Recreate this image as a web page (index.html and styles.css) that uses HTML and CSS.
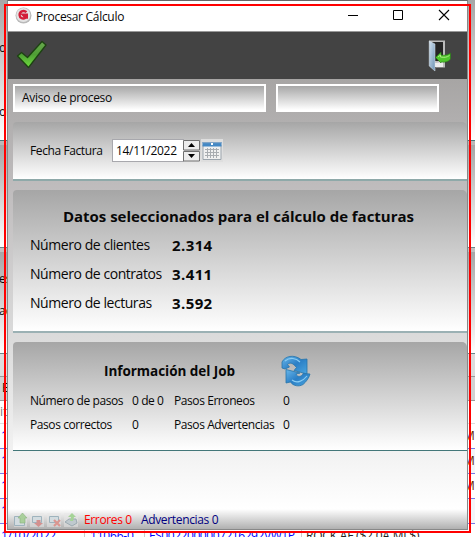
FILE: index.html
```html
<!DOCTYPE html>
<html lang="es">
<head>
<meta charset="utf-8">
<title>Procesar Cálculo</title>
<link rel="stylesheet" href="styles.css">
</head>
<body>
<div class="desk">
  <div class="back b1"><span>o</span><span>or</span></div>
  <div class="back b2"></div>
  <div class="back b3"><span>es</span><span>ac</span></div>
  <div class="back b4"></div>
  <div class="back head">E</div>
  <div class="back filter">it</div>
  <div class="back row"><span>1</span><b>M</b></div>
  <div class="back row alt"><span>1</span><b>M</b></div>
  <div class="back row"><span>1</span><b>M</b></div>
  <div class="back row alt"><span>1</span></div>
  <div class="back last"><span class="c1">1/10/2022</span><span class="c2">11066-0</span><span class="c3">ES0022000007216292VW1P</span><span class="c4">ROCK AF ($2.0A.ML$)</span></div>
</div>
<main class="window">
  <header class="title">
    <svg class="logo" width="17" height="17" viewBox="0 0 17 17"><circle cx="8.500" cy="8.500" r="8" fill="#b9b9b9"/><circle cx="8.300" cy="8" r="7" fill="#e4e4e4"/><path d="M11.500 5.200C8.500 2.600 4.400 4.800 4.600 8.200C4.800 11.200 7.800 12.300 10.600 10.800L7.800 7.800H11.800V11.800" fill="none" stroke="#d31e38" stroke-width="2.400"/></svg>
    <h1>Procesar Cálculo</h1>
    <svg class="controls" width="104" height="12" viewBox="0 0 104 12" fill="none" stroke="#000"><path d="M0 6.500h10M45.500 1.500h9v9h-9z"/><path d="M91 1l10 10M101 1L91 11" stroke-width="1.100"/></svg>
  </header>
  <nav class="tools">
    <svg width="32" height="30" viewBox="0 0 32 30"><defs><linearGradient id="g" x1="0" y1="0" x2="0" y2="1"><stop offset="0" stop-color="#6aa84f"/><stop offset=".5" stop-color="#4f9e35"/><stop offset="1" stop-color="#6ee03c"/></linearGradient></defs><path d="M1.500 16L5.500 12.500L11.500 17.500L26 1.500L30 5L12.500 27.500Z" fill="url(#g)" stroke="#1d4212" stroke-width="1.300" stroke-linejoin="round"/></svg>
    <svg width="24" height="32" viewBox="0 0 24 32"><defs><linearGradient id="d" x1="0" y1="0" x2="1" y2="1"><stop offset="0" stop-color="#d2e2f0"/><stop offset="1" stop-color="#6d93b4"/></linearGradient></defs><path d="M1 .5h16v27H8" fill="#bbb"/><path d="M4 2h11v19H6z" fill="#252525"/><path d="M7 23l8-1v5H7z" fill="#ededed"/><path d="M1.200 1L7 4v27L1.200 26z" fill="url(#d)" stroke="#dce6ed" stroke-width=".5"/><path d="M7.500 17.500L13 12v3c4 .8 7-.2 9.500-2v6c-2 3-6 3.500-9.500 3v1z" fill="#4fc52c" stroke="#287718" stroke-width=".6"/><path d="M10 17l2.500-2v2c4 .7 6 .5 9-1.500" stroke="#a7ec7e" fill="none"/></svg>
  </nav>
  <section class="content">
    <div class="fields"><div class="field notice"><span>Aviso de proceso</span></div><div class="field state"></div></div>
    <section class="panel invoice">
      <label>Fecha Factura</label>
      <div class="date"><span>14/11/2022</span></div>
      <svg class="spin" width="17" height="23" viewBox="0 0 17 23"><path d="M.5 1.500h16v9.500H.5zM.5 12.500h16v9.500H.5z" fill="#ececec" stroke="#707070"/><path d="M5 8l3.500-4L12 8zM5 15h7l-3.500 4z"/></svg>
      <svg class="calendar" width="22" height="23" viewBox="0 0 22 23"><path d="M0 0h22v23H0z" fill="#dedede"/><path d="M2 6h18v14.500H2z" fill="#f0f0f0" stroke="#9ba4ac"/><path d="M1.500 3h19v4.500h-19z" fill="#4488c4"/><path d="M1.500 3h19v1.200h-19z" fill="#80a3c5"/><path d="M10 5h2" stroke="#fff" stroke-width="2"/><path d="M4 10.500h14M4 13.500h14M4 16.500h14M6.500 9v10M9.500 9v10M12.500 9v10M15.500 9v10" stroke="#a9adb1"/></svg>
    </section>
    <section class="panel data">
      <h2>Datos seleccionados para el cálculo de facturas</h2>
      <dl>
        <dt>Número de clientes</dt><dd>2.314</dd>
        <dt>Número de contratos</dt><dd>3.411</dd>
        <dt>Número de lecturas</dt><dd>3.592</dd>
      </dl>
    </section>
    <section class="panel job">
      <div class="jobhead"><h3>Información del Job</h3>
        <svg width="30" height="32" viewBox="0 0 30 32"><defs><linearGradient id="r" x1="0" y1="0" x2="1" y2="1"><stop offset="0" stop-color="#69b7ea"/><stop offset=".5" stop-color="#2b7fc6"/><stop offset="1" stop-color="#4ba6e0"/></linearGradient></defs><path d="M1 13V7C4 1 13-1 20 4.500L26 4V19L13 15.500L15.500 12.500C12 8 9 7 6.500 9.500L8.500 12L4 14Z" fill="url(#r)" stroke="#2775aa" stroke-width=".8"/><path d="M5 28V14.500L19 18L15 19C16 22.500 21 22 22 18.500L29 19C28 23 25 27 22 29.500C18 32 12 31 9.500 27Z" fill="url(#r)" stroke="#2775aa" stroke-width=".8"/><path d="M4 6c5-4 11-3 15 1M11 25c5 4 11 1 15-4" fill="none" stroke="#8accf2" stroke-width="1.200"/></svg>
      </div>
      <div class="stats">
        <span>Número de pasos</span><span>0 de 0</span><span>Pasos Erroneos</span><span>0</span>
        <span>Pasos correctos</span><span>0</span><span>Pasos Advertencias</span><span>0</span>
      </div>
    </section>
  </section>
  <footer class="status">
    <svg width="66" height="16" viewBox="0 0 66 16"><path d="M1 1h13v14H1zM17 1h14v14H17zM34 1h14v14H34zM51 1h14v14H51z" fill="#e8e8e8" opacity=".5"/><path d="M1.500 4.500h10v9h-10zM19.500 4.500h9v6h-9zM36.500 4.500h9v6h-9z" fill="#d3dce0" stroke="#9eb3bd"/><path d="M9.500 1L14 6h-2v5H7V6H5z" fill="#a9cf9b" stroke="#8cb37f" stroke-width=".6"/><path d="M23.500 8h4v3h2.500l-4.500 4-4.500-4h2.500z" fill="#d3918f"/><path d="M41 8l6 6M47 8l-6 6" stroke="#db9690" stroke-width="2.200"/><path d="M52 10l4-3h7l1 4-5 3z" fill="#bfc9ce" stroke="#9caab1"/><path d="M59 1l4 4h-2l-1 4h-3l1-4h-3z" fill="#a5d397"/></svg>
    <span class="err">Errores 0</span><span class="warn">Advertencias 0</span>
  </footer>
</main>
<div class="outline"></div>
</body>
</html>
```
FILE: styles.css
```css
* { box-sizing: border-box; }
body { margin: 0; width: 475px; height: 537px; overflow: hidden; position: relative; font: 12px/16px "Open Sans", "Noto Sans", sans-serif; color: #080808; }
h1, h2, h3, dl, dd { margin: 0; }
svg { display: block; flex: none; }
.desk { height: 537px; overflow: hidden; }
.back { width: 475px; overflow: hidden; white-space: nowrap; }
.b1 { height: 141px; padding-top: 40px; background: linear-gradient(#a6a6a6, #fff); border-bottom: 1px solid #437779; }
.b1 span, .b3 span { display: block; margin-left: -1px; }
.b1 span + span { margin-top: 48px; }
.b2 { height: 107px; border-top: 4px solid #bab8b8; border-bottom: 1px solid #68888b; background: linear-gradient(#a6a6a6, #fff); }
.b3 { height: 106px; padding-top: 19px; border-top: 4px solid #c2c2c2; border-bottom: 1px solid #68888b; background: linear-gradient(#a6a6a6, #fff); }
.b3 span + span { margin-top: 16px; }
.b4 { height: 23px; background: #ddd; border-bottom: 1px solid #999; }
.head { height: 24px; padding: 3px 2px; background: #d3d3d3; border-bottom: 1px solid #999; }
.filter { height: 23px; padding-top: 3px; color: #777; background: #fff; border-bottom: 1px solid #ddd; }
.row { height: 25px; padding: 4px 0 0 1px; border-bottom: 1px solid #7878e8; display: flex; justify-content: space-between; background: #fff; color: #00f; }
.row b { width: 11px; font-weight: 400; color: #642800; }
.alt { background: #f3f6fa; }
.last { height: 13px; display: flex; padding-left: 1px; color: #00f; background: #fff; line-height: 16px; }
.last span { padding-top: 4px; }
.c1 { width: 83px; letter-spacing: -.2px; }
.c2 { width: 60px; padding-left: 5px; border-left: 1px solid #ccc; letter-spacing: -.2px; }
.c3 { width: 157px; padding-left: 4px; border-left: 1px solid #ccc; letter-spacing: -.45px; }
.c4 { padding-left: 4px; border-left: 1px solid #ccc; color: #222; letter-spacing: -.2px; }
.window { position: absolute; left: 7px; top: 0; width: 461px; height: 530px; display: flex; flex-direction: column; border: 1px solid #888; border-top-color: #666; }
.title { height: 31px; padding: 6px 19px 0 7px; display: flex; background: #fff; border-bottom: 1px solid #999; }
.title h1 { margin: 1px 0 0 4px; font-size: 12px; line-height: 17px; font-weight: 400; letter-spacing: -.3px; }
.controls { margin: 2px -4px 0 auto; }
.tools { height: 47px; background: #434343; display: flex; justify-content: space-between; padding: 8px 15px 0 8px; }
.content { height: 430px; padding: 5px 0 0 5px; background: linear-gradient(#a7a5a4, #b0aeae 9%, #bfbcbd 25%, #dbdbdb 60%, #f2f2f2 87%, #fff); }
.fields { display: flex; gap: 10px; height: 28px; }
.field { border: 2px solid #fff; background: linear-gradient(#a7a7a7, #fff); padding: 4px 7px; }
.notice { width: 253px; letter-spacing: -.3px; }
.state { width: 163px; }
.panel { border-radius: 4px 5px 0 0; background: linear-gradient(#a6a6a6, #fff); }
.invoice { height: 59px; margin-top: 10px; border-bottom: 2px solid #8fa9a9; display: flex; padding: 17px 0 0 17px; }
.invoice label { width: 82px; padding-top: 4px; letter-spacing: -.4px; }
.date { width: 72px; height: 23px; background: #fff; border: 1px solid #a8a8ad; border-right: 0; padding: 3px 0 0 3px; letter-spacing: -.3px; }
.spin { margin-left: -1px; }
.calendar { margin-left: 1px; }
.data { height: 143px; margin-top: 9px; border-bottom: 2px solid #9bb1b4; padding: 15px 0 0 17px; }
.data h2 { margin-left: 33px; font-size: 15px; line-height: 22px; letter-spacing: -.03px; white-space: nowrap; }
.data dl { display: grid; grid-template-columns: 142px 1fr; grid-auto-rows: 29.3px; padding-top: 3px; align-items: center; font-size: 14px; }
.data dt { letter-spacing: -.44px; white-space: nowrap; }
.data dd { font-size: 15px; font-weight: 700; letter-spacing: .4px; }
.job { height: 109px; margin-top: 9px; border-bottom: 1px solid #437779; padding: 13px 0 0 17px; }
.jobhead { display: flex; height: 34px; }
.job h3 { width: 177px; margin: 6px 0 0 74px; font-size: 13.5px; line-height: 20px; white-space: nowrap; letter-spacing: -.04px; }
.stats { display: grid; grid-template-columns: 102px 42px 109px 1fr; grid-auto-rows: 24px; align-items: center; letter-spacing: -.42px; white-space: nowrap; }
.status { height: 20px; display: flex; background: linear-gradient(#fff, #b0b0b0); padding-left: 5px; white-space: nowrap; }
.status svg { margin-top: 3px; }
.status span { margin-top: 3px; letter-spacing: -.35px; }
.err { width: 57px; margin-left: 5px; color: red; }
.warn { color: #000080; }
.outline { position: absolute; left: 4px; top: 4px; width: 467px; height: 529px; border: 2px solid red; }
```
